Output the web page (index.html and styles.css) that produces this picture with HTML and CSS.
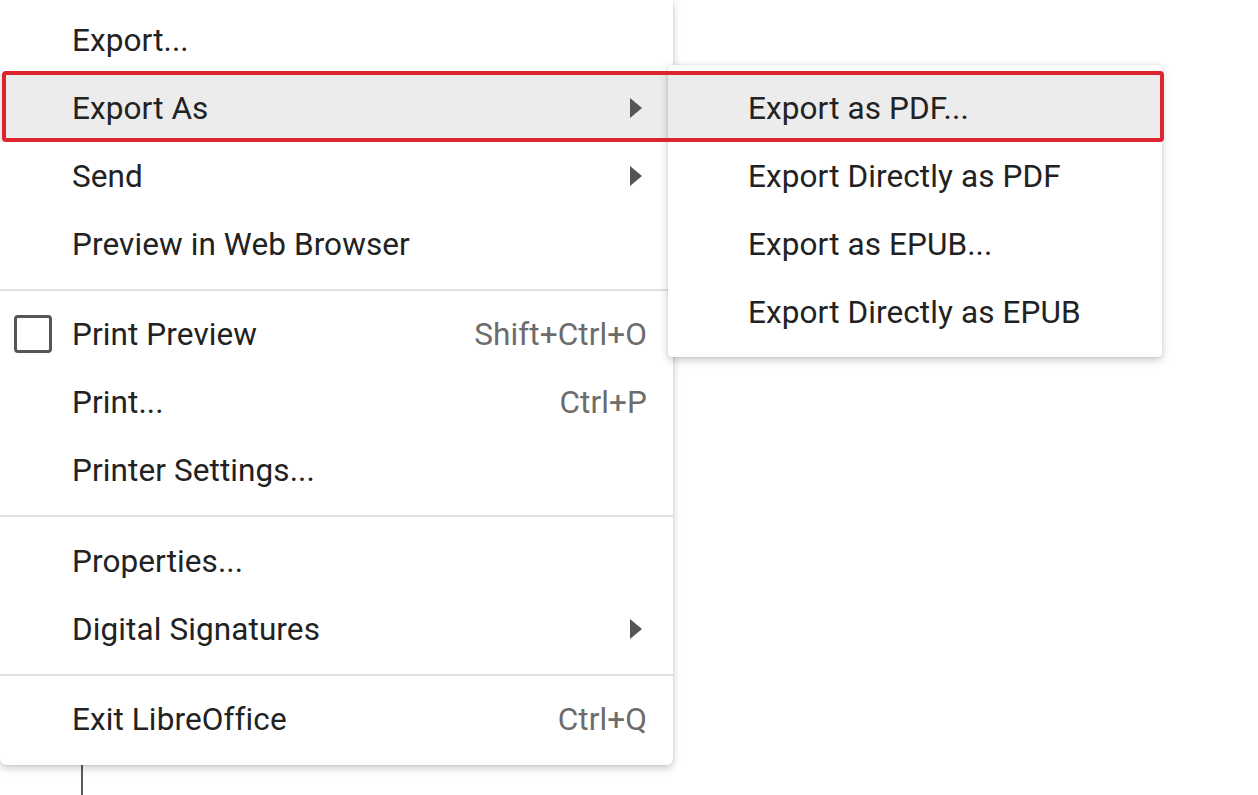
FILE: index.html
```html
<!DOCTYPE html>
<html lang="en">
<head>
<meta charset="utf-8">
<title>File menu – Export As</title>
<link rel="stylesheet" href="styles.css">
</head>
<body>
<div class="screen">
  <div class="document">
    <div class="page-edge"></div>
  </div>

  <div class="menu main-menu">
    <div class="item"><span class="label">Export...</span></div>
    <div class="item active"><span class="label">Export As</span><span class="arrow"></span></div>
    <div class="item"><span class="label">Send</span><span class="arrow"></span></div>
    <div class="item"><span class="label">Preview in Web Browser</span></div>
    <div class="sep"></div>
    <div class="item has-icon"><span class="check"></span><span class="label">Print Preview</span><span class="shortcut">Shift+Ctrl+O</span></div>
    <div class="item"><span class="label">Print...</span><span class="shortcut">Ctrl+P</span></div>
    <div class="item"><span class="label">Printer Settings...</span></div>
    <div class="sep sep-wide"></div>
    <div class="item"><span class="label">Properties...</span></div>
    <div class="item"><span class="label">Digital Signatures</span><span class="arrow"></span></div>
    <div class="sep"></div>
    <div class="item"><span class="label">Exit LibreOffice</span><span class="shortcut">Ctrl+Q</span></div>
  </div>

  <div class="menu sub-menu">
    <div class="item active"><span class="label">Export as PDF...</span></div>
    <div class="item"><span class="label">Export Directly as PDF</span></div>
    <div class="item"><span class="label">Export as EPUB...</span></div>
    <div class="item"><span class="label">Export Directly as EPUB</span></div>
  </div>

  <div class="callout"></div>
</div>
</body>
</html>
```

FILE: styles.css
```css
* { box-sizing: border-box; }

html, body {
  margin: 0;
  padding: 0;
  background: #ffffff;
}

body {
  font-family: Roboto, "Liberation Sans", Arial, sans-serif;
  color: #222222;
}

.screen {
  position: relative;
  width: 1258px;
  height: 795px;
  overflow: hidden;
  background: #ffffff;
}

.document {
  height: 100%;
  padding-left: 81px;
}

.page-edge {
  height: 100%;
  width: 2px;
  background: #5a5a5a;
}

.menu {
  position: absolute;
  background: #ffffff;
}

.main-menu {
  left: 0;
  top: 0;
  width: 673px;
  padding: 6px 0 12px;
  border-radius: 0 0 6px 6px;
  box-shadow: 0 3px 8px rgba(0, 0, 0, 0.22), 0 0 2px rgba(0, 0, 0, 0.12);
  z-index: 1;
}

.sub-menu {
  left: 668px;
  top: 65px;
  width: 494px;
  padding: 9px 0 11px;
  border-radius: 4px;
  box-shadow: 0 3px 8px rgba(0, 0, 0, 0.22), 0 0 2px rgba(0, 0, 0, 0.12);
  z-index: 2;
}

.item {
  display: flex;
  align-items: center;
  height: 68px;
  padding: 0 26px 0 72px;
  font-size: 31.5px;
  white-space: nowrap;
}

.sub-menu .item {
  padding-left: 80px;
}

.item.active {
  background: #ececec;
}

.item.has-icon {
  padding-left: 14px;
}

.check {
  width: 38px;
  height: 38px;
  border: 3.5px solid #555555;
  border-radius: 4px;
  margin-right: 20px;
  flex: none;
}

.label {
  flex: 1;
  letter-spacing: 0.1px;
}

.shortcut {
  color: #6c6c6c;
  letter-spacing: 0.1px;
}

.arrow {
  width: 0;
  height: 0;
  border-top: 10px solid transparent;
  border-bottom: 10px solid transparent;
  border-left: 12px solid #555555;
  margin-right: 5px;
}

.sep {
  height: 2px;
  margin: 11px 0 9px;
  background: #e0e0e0;
}

.sep-wide {
  margin: 11px 0 10px;
}

.callout {
  position: absolute;
  left: 2px;
  top: 71px;
  width: 1162px;
  height: 71px;
  border: 4.5px solid #dd2530;
  border-radius: 4px;
  z-index: 3;
  pointer-events: none;
}
```
